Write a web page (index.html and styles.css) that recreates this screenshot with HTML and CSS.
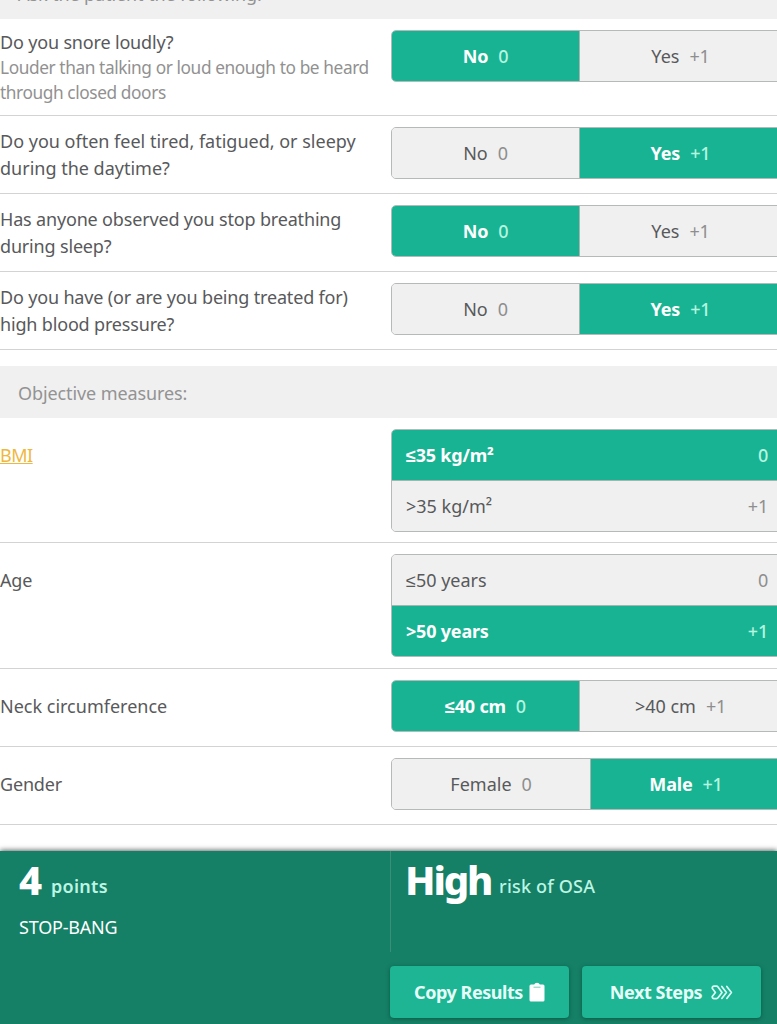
FILE: index.html
```html
<!DOCTYPE html>
<html lang="en">
<head>
    <meta charset="UTF-8">
    <meta name="viewport" content="width=device-width, initial-scale=1.0">
    <title>STOP-BANG Score</title>
    <link rel="stylesheet" href="styles.css">
</head>
<body>
    <main class="calc">
        <h2 class="section-title">Ask the patient the following:</h2>

        <div class="row row-tall">
            <div class="label">
                <p>Do you snore loudly?</p>
                <p class="hint">Louder than talking or loud enough to be heard through closed doors</p>
            </div>
            <div class="toggle">
                <button class="option active">No <span class="pts">0</span></button>
                <button class="option">Yes <span class="pts">+1</span></button>
            </div>
        </div>

        <div class="row">
            <div class="label two-lines"><p class="wide">Do you often feel tired, fatigued, or sleepy during the daytime?</p></div>
            <div class="toggle">
                <button class="option">No <span class="pts">0</span></button>
                <button class="option active">Yes <span class="pts">+1</span></button>
            </div>
        </div>

        <div class="row">
            <div class="label two-lines"><p>Has anyone observed you stop breathing during sleep?</p></div>
            <div class="toggle">
                <button class="option active">No <span class="pts">0</span></button>
                <button class="option">Yes <span class="pts">+1</span></button>
            </div>
        </div>

        <div class="row">
            <div class="label two-lines"><p>Do you have (or are you being treated for) high blood pressure?</p></div>
            <div class="toggle">
                <button class="option">No <span class="pts">0</span></button>
                <button class="option active">Yes <span class="pts">+1</span></button>
            </div>
        </div>

        <h2 class="section-title spaced">Objective measures:</h2>

        <div class="row row-list bmi">
            <div class="label"><a class="link" href="#">BMI</a></div>
            <div class="toggle stacked">
                <button class="option active">≤35 kg/m² <span class="pts">0</span></button>
                <button class="option">&gt;35 kg/m² <span class="pts">+1</span></button>
            </div>
        </div>

        <div class="row row-list">
            <div class="label"><p>Age</p></div>
            <div class="toggle stacked">
                <button class="option">≤50 years <span class="pts">0</span></button>
                <button class="option active">&gt;50 years <span class="pts">+1</span></button>
            </div>
        </div>

        <div class="row">
            <div class="label"><p class="wide">Neck circumference</p></div>
            <div class="toggle">
                <button class="option active">≤40 cm <span class="pts">0</span></button>
                <button class="option">&gt;40 cm <span class="pts">+1</span></button>
            </div>
        </div>

        <div class="row">
            <div class="label"><p>Gender</p></div>
            <div class="toggle gender">
                <button class="option">Female <span class="pts">0</span></button>
                <button class="option active">Male <span class="pts">+1</span></button>
            </div>
        </div>
    </main>

    <footer class="results">
        <div class="scores">
            <div class="score">
                <p class="score-line"><strong>4</strong><span class="points">points</span></p>
                <p class="score-name">STOP-BANG</p>
            </div>
            <div class="score risk">
                <p class="score-line"><strong>High</strong><span class="risk-text">risk of OSA</span></p>
            </div>
        </div>
        <div class="actions">
            <button class="action">
                <span>Copy Results</span>
                <svg class="icon-clipboard" viewBox="0 0 16 20">
                    <path fill="#fff" d="M2 2.5h3.2a2.9 2.5 0 0 1 5.6 0H14a1.5 1.5 0 0 1 1.5 1.5v14a1.5 1.5 0 0 1-1.5 1.5H2A1.5 1.5 0 0 1 .5 18V4A1.5 1.5 0 0 1 2 2.5z"/>
                    <path stroke="#78cdb5" stroke-width="1" d="M4.5 5.2h7"/>
                </svg>
            </button>
            <button class="action next">
                <span>Next Steps</span>
                <svg class="icon-arrows" viewBox="0 0 22 15" fill="none" stroke="#d9fff4" stroke-width="1.7" stroke-linejoin="round" stroke-linecap="round">
                    <path d="M1.2 3.2Q1.4 1.2 3 1.2h2.6q.8 0 1.4.8l4 5.4-4 5.4q-.6.8-1.4.8H3q-1.6 0-1.8-2l3.2-4.2z"/>
                    <path d="M10.8 1.4l4.6 6-4.6 6M15.8 1.4l4.6 6-4.6 6"/>
                </svg>
            </button>
        </div>
    </footer>
</body>
</html>
```

FILE: styles.css
```css
* {
    box-sizing: border-box;
    margin: 0;
    padding: 0;
}

body {
    height: 1024px;
    overflow: hidden;
    display: flex;
    flex-direction: column;
    background: #fff;
    color: #58595b;
    font-family: "Noto Sans", sans-serif;
    font-size: 18px;
}

button {
    font: inherit;
    color: inherit;
    border: none;
    cursor: pointer;
}

.calc {
    margin-top: -33px;
    height: 884px;
    flex: none;
}

.section-title {
    height: 52px;
    padding-left: 18px;
    line-height: 55px;
    background: #f0f0f0;
    color: #939393;
    font-size: 18px;
    font-weight: 400;
    letter-spacing: -0.1px;
}

.section-title.spaced {
    margin-top: 16px;
}

.row {
    display: flex;
    align-items: flex-start;
    padding: 11px 0 14px;
    border-bottom: 1px solid #d3d3d3;
}

.row-tall {
    height: 97px;
}

.row-list {
    padding-bottom: 11px;
}

.row-list.bmi {
    padding-bottom: 10px;
}

.label {
    width: 391px;
    height: 52px;
    padding-right: 16px;
    flex: none;
    display: flex;
    flex-direction: column;
    justify-content: center;
    line-height: 27px;
    letter-spacing: -0.17px;
}

.label .wide {
    letter-spacing: 0;
}

.label.two-lines {
    height: 55px;
    margin-bottom: -3px;
}

.row-tall .label {
    height: 74px;
}

.hint {
    color: #919191;
    font-size: 17.3px;
    line-height: 24.5px;
    letter-spacing: -0.41px;
}

.link {
    color: #efb73e;
    letter-spacing: -0.5px;
}

.toggle {
    width: 391px;
    flex: none;
    display: grid;
    grid-template-columns: 187px 1fr;
    overflow: hidden;
    border: 1px solid #b5b9b7;
    border-radius: 5px;
    background: #f0f0f0;
}

.option {
    height: 50px;
    display: flex;
    align-items: center;
    justify-content: center;
    gap: 10px;
    background: #f0f0f0;
}

.option + .option {
    border-left: 1px solid #a3b5ae;
}

.option.active {
    background: #18b392;
    color: #fff;
    font-weight: 700;
    letter-spacing: -0.2px;
}

.pts {
    color: #8e8e8e;
    font-weight: 400;
    letter-spacing: -0.2px;
}

.active .pts {
    color: #b5f5e0;
    font-weight: 500;
}

.toggle.gender {
    grid-template-columns: 198px 1fr;
}

.toggle.stacked {
    grid-template-columns: 1fr;
}

.stacked .option {
    justify-content: space-between;
    padding: 0 13px 0 14px;
}

.stacked .option + .option {
    height: 51px;
    border-left: none;
    border-top: 1px solid #a3b5ae;
}

.results {
    flex: 1;
    background: #158066;
    color: #fff;
    box-shadow: 0 -1px 5px rgba(0, 0, 0, 0.6);
}

.scores {
    display: flex;
    height: 101px;
}

.score {
    width: 390px;
    padding: 3px 0 0 19px;
    flex: none;
}

.score.risk {
    border-left: 1px solid #389078;
    padding-left: 14px;
}

.score-line {
    height: 54px;
    display: flex;
    line-height: 52px;
    white-space: nowrap;
    color: #bdf5e4;
}

.score-line strong {
    color: #fff;
    font-size: 40px;
    font-weight: 800;
    letter-spacing: -2.2px;
}

.points {
    margin: 6px 0 0 11px;
    font-weight: 600;
    letter-spacing: 0.3px;
}

.risk-text {
    margin: 6px 0 0 8px;
    font-weight: 500;
    letter-spacing: 0.2px;
}

.score-name {
    line-height: 39px;
    letter-spacing: -0.2px;
}

.actions {
    display: flex;
    gap: 13px;
    padding: 14px 0 0 390px;
}

.action {
    width: 179px;
    height: 52px;
    display: flex;
    align-items: center;
    justify-content: center;
    gap: 6px;
    border-radius: 4px;
    background: #1db594;
    box-shadow: 0 1px 4px rgba(0, 50, 35, 0.5);
    color: #e6fff8;
    font-weight: 700;
    letter-spacing: -0.45px;
}

.action.next {
    gap: 9px;
}

.icon-clipboard {
    width: 16px;
    height: 20px;
}

.icon-arrows {
    width: 22px;
    height: 15px;
}
```
